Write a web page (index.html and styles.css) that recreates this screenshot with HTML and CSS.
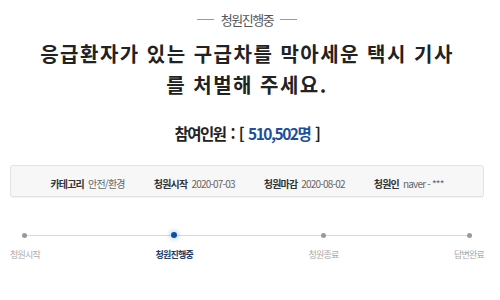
FILE: index.html
```html
<!DOCTYPE html>
<html lang="ko">
<head>
  <meta charset="UTF-8">
  <meta name="viewport" content="width=device-width, initial-scale=1.0">
  <title>청원 상세</title>
  <link rel="stylesheet" href="styles.css">
</head>
<body>
  <div class="petition">
    <!-- 진행 상태 -->
    <div class="status"><span>청원진행중</span></div>
    <h1 class="petition-title">응급환자가 있는 구급차를 막아세운 택시 기사를 처벌해 주세요.</h1>
    <p class="count">참여인원 : [ <span class="count-num">510,502명</span> ]</p>

    <!-- 청원 정보 -->
    <ul class="info">
      <li><strong>카테고리</strong> 안전/환경</li>
      <li><strong>청원시작</strong> 2020-07-03</li>
      <li><strong>청원마감</strong> 2020-08-02</li>
      <li><strong>청원인</strong> naver - ***</li>
    </ul>

    <!-- 진행 단계 -->
    <ol class="steps">
      <li class="step"><i class="dot"></i>청원시작</li>
      <li class="step on"><i class="dot"></i>청원진행중</li>
      <li class="step"><i class="dot"></i>청원종료</li>
      <li class="step"><i class="dot"></i>답변완료</li>
    </ol>
  </div>
</body>
</html>
```
FILE: styles.css
```css
/* 기본 */
body {
  margin: 0;
  padding: 0;
  background: #fff;
  color: #222;
  font-family: "Noto Sans CJK KR", "Noto Sans", sans-serif;
}
.petition {
  width: 474px;
  margin-left: 10px;
  padding-top: 10px;
  text-align: center;
}
/* 상단 상태 */
.status {
  display: flex;
  justify-content: center;
  align-items: center;
  gap: 7px;
  height: 18px;
  font-size: 13px;
  letter-spacing: -1.5px;
  color: #555;
}
.status::before,
.status::after {
  content: "";
  width: 17px;
  height: 1px;
  background: #999;
}
.petition-title {
  width: 426px;
  margin: 10px auto 0;
  font-size: 20px;
  line-height: 31px;
  letter-spacing: 1.5px;
  font-weight: bold;
  color: #222;
}
.count {
  margin: 21px 0 0;
  font-size: 15.5px;
  line-height: 24px;
  letter-spacing: -1.5px;
  word-spacing: 2px;
  font-weight: bold;
  color: #222;
}
.count-num {
  color: #1c4f9f;
}
/* 정보 박스 */
.info {
  list-style: none;
  margin: 20px 0 0;
  padding: 4px 0 0;
  box-sizing: border-box;
  height: 32px;
  display: flex;
  justify-content: center;
  align-items: center;
  gap: 29px;
  background: #f7f7f7;
  border: 1px solid #e3e3e3;
  border-radius: 3px;
  box-shadow: 0 1px 1px rgba(0, 0, 0, 0.05);
  font-size: 10px;
  letter-spacing: -0.8px;
  color: #666;
}
.info strong {
  color: #333;
  margin-right: 2px;
}
/* 진행 단계 */
.steps {
  list-style: none;
  margin: 31px 0 0;
  padding: 0;
  display: flex;
  justify-content: space-between;
  position: relative;
}
.steps::before {
  content: "";
  position: absolute;
  top: 7px;
  left: 16px;
  right: 16px;
  height: 1px;
  background: #d9d9d9;
}
.step {
  display: flex;
  flex-direction: column;
  align-items: center;
  font-size: 9px;
  line-height: 14px;
  letter-spacing: -0.8px;
  color: #aaa;
}
.dot {
  position: relative;
  display: block;
  width: 5px;
  height: 5px;
  margin: 5px 0 10px;
  border-radius: 50%;
  background: #999;
}
.step.on {
  color: #243b63;
  font-weight: bold;
}
.step.on .dot {
  width: 6px;
  height: 6px;
  margin: 4px 0 10px;
  background: #0b4ea8;
  box-shadow: 0 0 3px 3px rgba(40, 120, 220, 0.15);
}
```
